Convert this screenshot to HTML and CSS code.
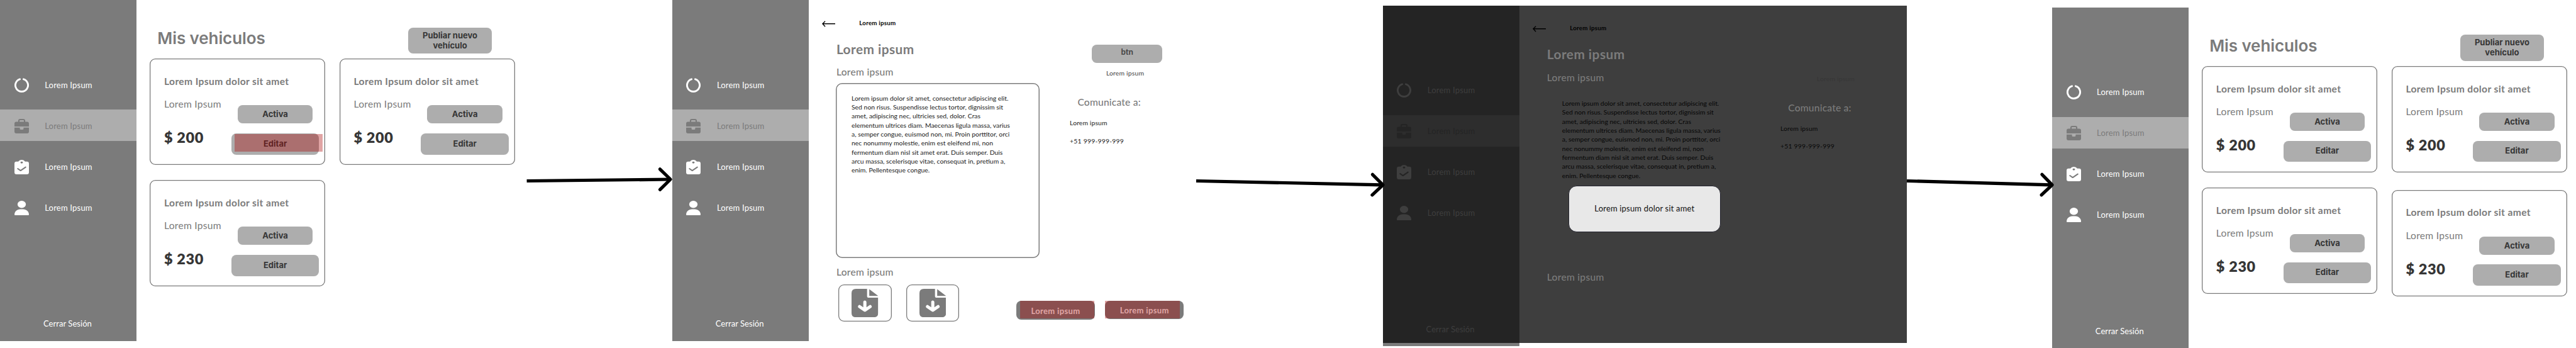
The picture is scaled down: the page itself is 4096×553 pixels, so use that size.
FILE: index.html
```html
<!DOCTYPE html>
<html lang="es">
<head>
<meta charset="utf-8">
<title>Mis vehiculos</title>
<link rel="stylesheet" href="styles.css">
</head>
<body>
<svg class="sprite" aria-hidden="true">
  <symbol id="i-ring" viewBox="0 0 35 35"><path d="M13 2.8A15.3 15.3 0 1 0 22 2.8" fill="none" stroke="currentColor" stroke-width="4.4" stroke-linecap="round"/></symbol>
  <symbol id="i-case" viewBox="0 0 35 35"><path d="M10.6 8V4.6Q10.6 1.6 13.6 1.6H21.4Q24.4 1.6 24.4 4.6V8" fill="none" stroke="currentColor" stroke-width="3.2"/><path d="M4.5 6.9H30.5Q35 6.9 35 11.4V18.2H0V11.4Q0 6.9 4.5 6.9ZM0 21H13V23.5Q13 26 15.5 26H19.5Q22 26 22 23.5V21H35V30.5Q35 35 30.5 35H4.5Q0 35 0 30.5Z" fill="currentColor"/></symbol>
  <symbol id="i-check" viewBox="0 0 35 35"><path fill-rule="evenodd" d="M5 4.2H9.2Q12 0 17.5 0T25.8 4.2H30Q35 4.2 35 9.2V30Q35 35 30 35H5Q0 35 0 30V9.2Q0 4.2 5 4.2ZM17.5 4.3A3 2.2 0 1 0 17.5 8.7A3 2.2 0 1 0 17.5 4.3Z" fill="currentColor"/><path class="tick" d="M8 21.3L14.8 26L27 17.6" fill="none" stroke-width="3.1" stroke-linecap="round" stroke-linejoin="round"/></symbol>
  <symbol id="i-user" viewBox="0 0 35 35"><ellipse cx="17.5" cy="8.8" rx="10.1" ry="8.8" fill="currentColor"/><path d="M1.5 35Q0 35 0 33.5C0 26.5 6 20.7 14 20.7H21C29 20.7 35 26.5 35 33.5Q35 35 33.5 35Z" fill="currentColor"/></symbol>
  <symbol id="i-file" viewBox="0 0 42.4 45.2"><path d="M7 0H24.7V11.5Q24.7 14.1 27.3 14.1H42.4V38.2Q42.4 45.2 35.4 45.2H7Q0 45.2 0 38.2V7Q0 0 7 0ZM28.2 .4L42.4 11.3H28.2Z" fill="#7b7b7b"/><path d="M21.2 21V33M12.8 28.2L21.2 34L29.6 28.2" fill="none" stroke="#fff" stroke-width="5" stroke-linecap="round" stroke-linejoin="round"/></symbol>
  <symbol id="i-back" viewBox="0 0 21 10"><path d="M21 4.8H1M5.1 .8L.9 4.8L5.1 9.2" fill="none" stroke="#000" stroke-width="1.4"/></symbol>
</svg>

<div class="flow">
  <section class="screen">
    <nav class="side">
      <a class="item"><svg><use href="#i-ring"/></svg><span>Lorem Ipsum</span></a>
      <a class="item active"><svg><use href="#i-case"/></svg><span>Lorem Ipsum</span></a>
      <a class="item"><svg><use href="#i-check"/></svg><span>Lorem Ipsum</span></a>
      <a class="item"><svg><use href="#i-user"/></svg><span>Lorem Ipsum</span></a>
      <a class="logout">Cerrar Sesión</a>
    </nav>
    <main class="list">
      <header class="list-head"><h1>Mis vehiculos</h1><button class="btn publish">Publiar nuevo<br>vehículo</button></header>
      <div class="cards">
        <article class="card"><h2>Lorem Ipsum dolor sit amet</h2><div class="row"><div class="info"><p>Lorem Ipsum</p><strong>$ 200</strong></div><div class="ops"><button class="btn state">Activa</button><button class="btn edit">Editar<i class="mark mark-edit"></i></button></div></div></article>
        <article class="card"><h2>Lorem Ipsum dolor sit amet</h2><div class="row"><div class="info"><p>Lorem Ipsum</p><strong>$ 200</strong></div><div class="ops"><button class="btn state">Activa</button><button class="btn edit">Editar</button></div></div></article>
        <article class="card"><h2>Lorem Ipsum dolor sit amet</h2><div class="row"><div class="info"><p>Lorem Ipsum</p><strong>$ 230</strong></div><div class="ops"><button class="btn state">Activa</button><button class="btn edit">Editar</button></div></div></article>
      </div>
    </main>
  </section>

  <svg class="link link-1" viewBox="833.1 0 235.6 553"><path d="M837.7 287.5L1066 285"/><path class="tip" d="M1049.5 268.8L1066.2 285L1049.5 301.3"/></svg>

  <section class="screen">
    <nav class="side">
      <a class="item"><svg><use href="#i-ring"/></svg><span>Lorem Ipsum</span></a>
      <a class="item active"><svg><use href="#i-case"/></svg><span>Lorem Ipsum</span></a>
      <a class="item"><svg><use href="#i-check"/></svg><span>Lorem Ipsum</span></a>
      <a class="item"><svg><use href="#i-user"/></svg><span>Lorem Ipsum</span></a>
      <a class="logout">Cerrar Sesión</a>
    </nav>
    <main class="detail">
      <header class="crumb"><svg><use href="#i-back"/></svg><span>Lorem ipsum</span></header>
      <div class="cols">
        <div class="left">
          <h1>Lorem ipsum</h1>
          <h2>Lorem ipsum</h2>
          <p class="box">Lorem ipsum dolor sit amet, consectetur adipiscing elit.<br>Sed non risus. Suspendisse lectus tortor, dignissim sit<br>amet, adipiscing nec, ultricies sed, dolor. Cras<br>elementum ultrices diam. Maecenas ligula massa, varius<br>a, semper congue, euismod non, mi. Proin porttitor, orci<br>nec nonummy molestie, enim est eleifend mi, non<br>fermentum diam nisl sit amet erat. Duis semper. Duis<br>arcu massa, scelerisque vitae, consequat in, pretium a,<br>enim. Pellentesque congue.</p>
          <h2 class="files-title">Lorem ipsum</h2>
          <div class="files"><a class="file"><svg><use href="#i-file"/></svg></a><a class="file"><svg><use href="#i-file"/></svg></a></div>
        </div>
        <div class="right">
          <button class="btn top">btn</button>
          <p class="caption">Lorem ipsum</p>
          <h3>Comunicate a:</h3>
          <p class="contact">Lorem ipsum</p>
          <p class="contact phone">+51 999-999-999</p>
          <div class="actions"><button class="btn action low">Lorem ipsum<i class="mark mark-a"></i></button><button class="btn action">Lorem ipsum<i class="mark mark-b"></i></button></div>
        </div>
      </div>
    </main>
  </section>

  <svg class="link link-2" viewBox="1901.8 0 296.8 553"><path d="M1901.8 287.5L2198 293.8"/><path class="tip" d="M2182.2 277.3L2198.8 293.9L2181.7 309.8"/></svg>

  <section class="screen dim">
    <nav class="side">
      <a class="item"><svg><use href="#i-ring"/></svg><span>Lorem Ipsum</span></a>
      <a class="item active"><svg><use href="#i-case"/></svg><span>Lorem Ipsum</span></a>
      <a class="item"><svg><use href="#i-check"/></svg><span>Lorem Ipsum</span></a>
      <a class="item"><svg><use href="#i-user"/></svg><span>Lorem Ipsum</span></a>
      <a class="logout">Cerrar Sesión</a>
    </nav>
    <main class="detail">
      <header class="crumb"><svg><use href="#i-back"/></svg><span>Lorem ipsum</span></header>
      <div class="cols">
        <div class="left">
          <h1>Lorem ipsum</h1>
          <h2>Lorem ipsum</h2>
          <p class="box">Lorem ipsum dolor sit amet, consectetur adipiscing elit.<br>Sed non risus. Suspendisse lectus tortor, dignissim sit<br>amet, adipiscing nec, ultricies sed, dolor. Cras<br>elementum ultrices diam. Maecenas ligula massa, varius<br>a, semper congue, euismod non, mi. Proin porttitor, orci<br>nec nonummy molestie, enim est eleifend mi, non<br>fermentum diam nisl sit amet erat. Duis semper. Duis<br>arcu massa, scelerisque vitae, consequat in, pretium a,<br>enim. Pellentesque congue.</p>
          <h2 class="files-title">Lorem ipsum</h2>
        </div>
        <div class="right">
          <p class="caption">Lorem ipsum</p>
          <h3>Comunicate a:</h3>
          <p class="contact">Lorem ipsum</p>
          <p class="contact phone">+51 999-999-999</p>
        </div>
      </div>
    </main>
    <div class="modal" role="dialog">Lorem ipsum dolor sit amet</div>
  </section>

  <svg class="link link-3" viewBox="3031.7 0 231.2 553"><path d="M3031.7 287.5L3262 293.8"/><path class="tip" d="M3246.6 277.3L3262.8 293.9L3245.7 309.8"/></svg>

  <section class="screen last">
    <nav class="side">
      <a class="item"><svg><use href="#i-ring"/></svg><span>Lorem Ipsum</span></a>
      <a class="item active"><svg><use href="#i-case"/></svg><span>Lorem Ipsum</span></a>
      <a class="item"><svg><use href="#i-check"/></svg><span>Lorem Ipsum</span></a>
      <a class="item"><svg><use href="#i-user"/></svg><span>Lorem Ipsum</span></a>
      <a class="logout">Cerrar Sesión</a>
    </nav>
    <main class="list">
      <header class="list-head"><h1>Mis vehiculos</h1><button class="btn publish">Publiar nuevo<br>vehículo</button></header>
      <div class="cards">
        <article class="card"><h2>Lorem Ipsum dolor sit amet</h2><div class="row"><div class="info"><p>Lorem Ipsum</p><strong>$ 200</strong></div><div class="ops"><button class="btn state">Activa</button><button class="btn edit">Editar</button></div></div></article>
        <article class="card"><h2>Lorem Ipsum dolor sit amet</h2><div class="row"><div class="info"><p>Lorem Ipsum</p><strong>$ 200</strong></div><div class="ops"><button class="btn state">Activa</button><button class="btn edit">Editar</button></div></div></article>
        <article class="card"><h2>Lorem Ipsum dolor sit amet</h2><div class="row"><div class="info"><p>Lorem Ipsum</p><strong>$ 230</strong></div><div class="ops"><button class="btn state">Activa</button><button class="btn edit">Editar</button></div></div></article>
        <article class="card drop"><h2>Lorem Ipsum dolor sit amet</h2><div class="row"><div class="info"><p>Lorem Ipsum</p><strong>$ 230</strong></div><div class="ops"><button class="btn state">Activa</button><button class="btn edit">Editar</button></div></div></article>
      </div>
    </main>
  </section>
</div>
</body>
</html>
```
FILE: styles.css
```css
* { box-sizing: border-box; margin: 0; padding: 0; }
body { width: 4096px; height: 553px; overflow: hidden; background: #fff; font-family: Lato, "Open Sans", sans-serif; }
.sprite { display: block; width: 0; height: 0; position: absolute; }
.flow { display: flex; align-items: flex-start; height: 553px; }

/* Screens */
.screen { --bg: #7b7b7b; --active: #adadad; --ink: #fff; display: flex; flex: none; width: 833.1px; height: 541.5px; position: relative; }
.side { flex: none; width: 217.4px; height: 541.5px; padding-top: 109.2px; background: var(--bg); display: flex; flex-direction: column; gap: 15px; color: var(--ink); font-size: 13.02px; letter-spacing: .015em; }
.item { flex: none; display: flex; align-items: center; gap: 25.5px; height: 50.1px; padding: 1.6px 0 0 22.7px; line-height: 1; }
.item svg { width: 23px; height: 23px; }
.item.active { background: var(--active); color: var(--bg); }
.tick { stroke: var(--bg); }
.logout { margin: auto 0 20px 69px; line-height: 1; letter-spacing: .003em; }

/* Arrows between screens */
.link { flex: none; height: 553px; overflow: visible; position: relative; z-index: 2; fill: none; stroke: #000; stroke-width: 5.2px; }
.link-1 { width: 235.6px; }
.link-2 { width: 296.8px; }
.link-3 { width: 231.2px; }
.tip { stroke-linecap: round; stroke-linejoin: round; }

/* Buttons */
.btn { display: flex; align-items: center; justify-content: center; flex: none; position: relative; border: 0; border-radius: 7.8px; background: #adadad; color: #363636; font: 700 13.02px/1.21 Inter, sans-serif; text-align: center; }
.mark { position: absolute; background: rgba(168, 2, 2, .36); }

/* Vehicle list */
.list { padding: 43.7px 0 0 20.9px; }
.list-head { display: flex; justify-content: space-between; width: 544px; height: 41.7px; padding-left: 12px; }
.list-head h1 { margin-top: 4.3px; font: 600 26.04px/1 Inter, sans-serif; color: #7b7b7b; letter-spacing: -.1px; }
.publish { width: 133.4px; height: 41.7px; }
.cards { display: grid; grid-template-columns: 278.9px 278.9px; gap: 24px 22.7px; margin-top: 7.7px; }
.card { height: 169px; padding: 28.9px 9.9px 0 22.7px; border-radius: 9px; box-shadow: inset 0 0 0 1.3px #7b7b7b; color: #7b7b7b; }
.card.drop { margin-top: 3.9px; }
.card h2 { font-size: 15.62px; line-height: 1; letter-spacing: .024em; font-weight: 700; white-space: nowrap; }
.row { display: flex; justify-content: space-between; }
.info { padding-top: 20.8px; }
.info p { font-size: 15.62px; line-height: 1; letter-spacing: .017em; white-space: nowrap; }
.info strong { display: block; margin-top: 33.2px; font-size: 23.43px; line-height: 1; font-weight: 800; color: #363636; letter-spacing: .028em; }
.ops { display: flex; flex-direction: column; align-items: center; gap: 15.8px; padding-top: 29.6px; }
.state { width: 119.4px; height: 29px; padding-top: 1px; }
.edit { width: 139.4px; height: 33.9px; padding-bottom: 1px; }
.mark-edit { left: 5.2px; top: 1.1px; width: 139.7px; height: 28.2px; }

/* Vehicle detail */
.detail { padding-top: 31.5px; color: #7b7b7b; }
.crumb { display: flex; height: 12px; padding-left: 20.9px; color: #000; font-size: 9.76px; line-height: 1; font-weight: 700; letter-spacing: .024em; }
.crumb svg { width: 21px; height: 10px; margin: 1.2px 38.3px 0 0; }
.cols { display: flex; }
.left { width: 367.3px; padding-left: 43px; }
.left h1 { margin: 24.4px 0 0 .8px; font-size: 20.83px; line-height: 1; letter-spacing: .022em; font-weight: 700; }
.left h2 { margin: 18.4px 0 0 .8px; font-size: 15.62px; line-height: 1; letter-spacing: .017em; font-weight: 500; }
.left h2.files-title { margin-top: 14.7px; }
.box { width: 324.3px; height: 278.4px; margin-top: 8.8px; padding: 17px 0 0 24.9px; border-radius: 10px; box-shadow: inset 0 0 0 1.5px #7b7b7b; color: #222; font-size: 10.41px; line-height: 14.35px; white-space: nowrap; }
.files { display: flex; gap: 23.3px; margin: 11.3px 0 0 4.1px; }
.file { display: flex; align-items: center; justify-content: center; width: 84.5px; height: 59.6px; border-radius: 9px; box-shadow: inset 0 0 0 1.3px #7b7b7b; }
.file svg { width: 42.4px; height: 45.2px; }
.right { width: 248px; }
.top { width: 111.3px; height: 29.3px; margin: 27.4px 0 0 83.1px; padding-bottom: 4.7px; font-family: Lato, sans-serif; color: #444; }
.caption { margin: 10.9px 0 0 105.5px; font-size: 10.41px; line-height: 1; letter-spacing: .017em; color: #444; }
.right h3 { margin: 33.7px 0 0 60px; font-size: 15.62px; line-height: 1; font-weight: 500; letter-spacing: .012em; }
.contact { margin: 19.3px 0 0 47.7px; font-size: 10.41px; line-height: 1; color: #222; letter-spacing: .01em; }
.phone { margin-top: 18.2px; letter-spacing: .02em; }
.actions { display: flex; gap: 16.6px; margin: 248.6px 0 0 -37.3px; }
.action { width: 124.7px; height: 29.3px; padding-top: 3px; background: #7b7b7b; color: #fff; font-family: Lato, sans-serif; letter-spacing: .026em; }
.action.low { margin-top: .7px; }
.mark-a { left: 5.9px; top: 0; width: 118.5px; height: 27.9px; }
.mark-b { left: 0; top: .7px; width: 118.5px; height: 27.9px; }

/* Dimmed screen with dialog */
.dim { --bg: #242424; --active: #2d2d2d; --ink: #3e3e3e; height: 536.2px; margin-top: 8.5px; background: #3e3e3e; }
.dim .side { height: 541.5px; border-bottom: 5.3px solid #7b7b7b; }
.dim .logout { margin-bottom: 15px; }
.dim .box { box-shadow: none; color: #050505; }
.dim .contact { color: #080808; }
.dim .caption { margin-top: 67.6px; color: #363636; }
.modal { position: absolute; left: 295.3px; top: 286.1px; width: 242px; height: 74.8px; display: flex; align-items: center; justify-content: center; padding-bottom: 1.5px; border: 1px solid #252530; border-radius: 13px; background: #e8e8e8; color: #111; font-size: 13.02px; letter-spacing: .013em; }
.last { margin-top: 11.6px; }
```
